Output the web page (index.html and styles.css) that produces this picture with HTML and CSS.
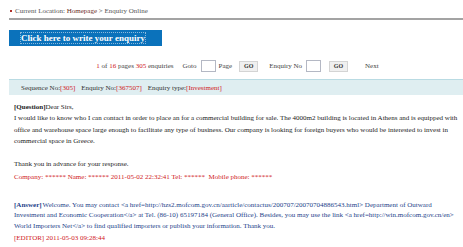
FILE: index.html
```html
<!DOCTYPE html>
<html lang="en">
<head>
<meta charset="UTF-8">
<title>Enquiry Online</title>
<link rel="stylesheet" href="styles.css">
</head>
<body>
<div class="crumb"><span class="dot"></span>Current Location: <a href="#">Homepage</a> &gt; Enquiry Online</div>
<div class="crumb-line"></div>

<a class="write-btn" href="#"><span>Click here to write your enquiry</span></a>

<div class="pager">
  <span class="count"><b class="num">1</b> of <b class="num">16</b> pages <b class="num">305</b> enquiries</span>
  <span class="go">Goto <input type="text"> Page <button>GO</button></span>
  <span class="go by-no">Enquiry No <input type="text"> <button>GO</button></span>
  <span class="next">Next</span>
</div>

<div class="info-bar">
  <span>Sequence No:<em>[305]</em></span>
  <span>Enquiry No:<em>[367507]</em></span>
  <span>Enquiry type:<em>[Investment]</em></span>
</div>

<div class="question">
  <p><b>[Question]</b>Dear Sirs,<br>
  I would like to know who I can contact in order to place an for a commercial building for sale. The 4000m2 building is located in Athens and is equipped with office and warehouse space large enough to facilitate any type of business. Our company is looking for foreign buyers who would be interested to invest in commercial space in Greece.<br><br>
  Thank you in advance for your response.</p>
  <p class="contact">Company: ****** Name: ****** 2011-05-02 22:32:41 Tel: ******&nbsp; Mobile phone: ******</p>
</div>

<div class="answer">
  <p><b>[Answer]</b>Welcome. You may contact &lt;a href=http://hzs2.mofcom.gov.cn/aarticle/contactus/200707/20070704886543.html&gt; Department of Outward Investment and Economic Cooperation&lt;/a&gt; at Tel. (86-10) 65197184 (General Office). Besides, you may use the link &lt;a href=http://win.mofcom.gov.cn/en&gt; World Importers Net&lt;/a&gt; to find qualified importers or publish your information. Thank you.</p>
  <p class="editor">[EDITOR] 2011-05-03 09:28:44</p>
</div>
</body>
</html>
```

FILE: styles.css
```css
body {
  margin: 0;
  font-family: "Liberation Serif", "Times New Roman", serif;
  font-size: 7px;
  color: #222;
  background: #fff;
}
a {
  text-decoration: none;
}
p {
  margin: 0;
}
.crumb {
  padding: 7px 0 0 10px;
  height: 9px;
  line-height: 9px;
  font-size: 7px;
  color: #555;
}
.crumb a {
  color: #6b2b1c;
}
.dot {
  display: inline-block;
  width: 2px;
  height: 2px;
  margin: 0 3px 1px 0;
  background: #b0302a;
  vertical-align: middle;
}
.crumb-line {
  margin: 2px 0 0 9px;
  border-bottom: 2px solid #a3a3a3;
}
.write-btn {
  display: flex;
  align-items: center;
  width: 141px;
  height: 16px;
  margin: 10px 0 0 9px;
  padding-left: 12px;
  background: #0b72bb;
  color: #fff;
  font-weight: bold;
  font-size: 9px;
}
.write-btn span {
  outline: 1px dotted #8ab8dc;
}
.pager {
  display: flex;
  justify-content: center;
  align-items: center;
  height: 14px;
  margin: 13px 0 0 12px;
  color: #444;
}
.num {
  font-weight: normal;
  color: #d0201c;
}
.go {
  display: flex;
  align-items: center;
  gap: 3px;
  margin-left: 9px;
}
.go.by-no {
  margin-left: 11px;
}
.pager input {
  width: 15px;
  height: 12px;
  margin: 0 0 0 1px;
  padding: 0;
  border: 1px solid #b4b8c4;
  background: #fff;
  box-sizing: border-box;
}
.pager button {
  width: 19px;
  height: 11px;
  margin-left: 4px;
  padding: 0;
  border: 1px solid #d4d4d4;
  background: #f0f0f0;
  font-family: "Liberation Serif", serif;
  font-weight: bold;
  font-size: 6px;
  color: #333;
}
.by-no button {
  margin-left: 5px;
}
.next {
  margin-left: 17px;
}
.info-bar {
  display: flex;
  align-items: center;
  gap: 6px;
  height: 15px;
  margin: 6px 0 0 9px;
  padding-left: 12px;
  background: #dfeef1;
  border-top: 1px solid #b9dbe3;
  color: #333;
}
.info-bar em {
  font-style: normal;
  color: #d0201c;
}
.question {
  padding: 7px 3px 0 14px;
  line-height: 11.4px;
}
.contact {
  margin-top: 2px;
  color: #d0201c;
}
.answer {
  padding: 16px 3px 0 14px;
  line-height: 10.5px;
  color: #1d3f8a;
}
.answer b {
  margin-right: 1px;
}
.editor {
  margin-top: 2px;
  color: #d0201c;
}
```
